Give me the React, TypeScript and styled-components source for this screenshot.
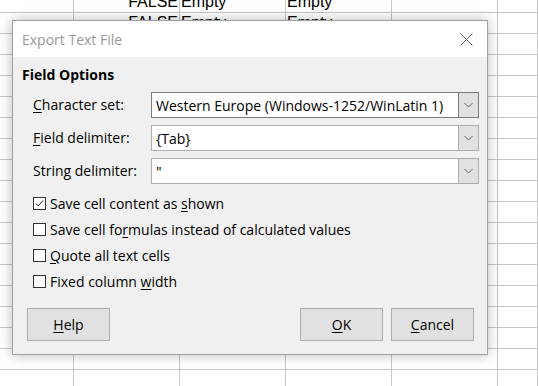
import React from 'react';
import styled, { createGlobalStyle } from 'styled-components';

const GlobalStyle = createGlobalStyle`
  html, body {
    margin: 0;
    padding: 0;
    background: #ffffff;
    overflow: hidden;
  }
  body {
    width: 538px;
    height: 386px;
    position: relative;
    font-family: 'Open Sans', 'Noto Sans', sans-serif;
  }
`;

const sheetRows = [
  ['', 'FALSE', 'Empty', 'Empty', '', ''],
  ['', 'FALSE', 'Empty', 'Empty', '', ''],
];

const Sheet = styled.div`
  display: grid;
  grid-template-columns: 74px repeat(4, 106px) 1fr;
  grid-auto-rows: 21px;
  margin-top: -8px;
`;

const Cell = styled.div<{ $right?: boolean }>`
  box-sizing: border-box;
  border-right: 1px solid #c6c6c6;
  border-bottom: 1px solid #c6c6c6;
  font-family: 'Liberation Sans', Arial, sans-serif;
  font-size: 16px;
  line-height: 20px;
  color: #000;
  padding: 0 1px;
  text-align: ${(p) => (p.$right ? 'right' : 'left')};
  overflow: hidden;
  white-space: nowrap;
`;

const Dialog = styled.div`
  position: absolute;
  left: 12px;
  top: 20px;
  width: 476px;
  height: 335px;
  box-sizing: border-box;
  border: 1px solid #a0a0a0;
  box-shadow: 0 0 12px rgba(0, 0, 0, 0.28);
  display: flex;
  flex-direction: column;
  background: #f0f0f0;
`;

const TitleBar = styled.div`
  height: 36px;
  background: #ffffff;
  display: flex;
  align-items: center;
  justify-content: space-between;
  padding: 0 14px 0 9px;
`;

const Title = styled.span`
  font-size: 14px;
  color: #9a9a9a;
`;

const Body = styled.div`
  flex: 1;
  display: flex;
  flex-direction: column;
  padding: 8px 13px 13px 9px;
  font-size: 14px;
  color: #000;
`;

const SectionHead = styled.div`
  font-weight: 700;
  line-height: 20px;
  margin-bottom: 7px;
`;

const FormGrid = styled.div`
  display: grid;
  grid-template-columns: 118px 328px;
  grid-auto-rows: 26px;
  row-gap: 7px;
  padding-left: 11px;
`;

const Label = styled.label`
  display: flex;
  align-items: center;
  line-height: 20px;
  white-space: pre;
`;

const Combo = styled.div<{ $focused?: boolean }>`
  display: flex;
  box-sizing: border-box;
  border: 1px solid ${(p) => (p.$focused ? '#7a7a7a' : '#abadb3')};
  background: #ffffff;
`;

const ComboText = styled.div`
  flex: 1;
  display: flex;
  align-items: center;
  padding-left: 4px;
  white-space: nowrap;
  overflow: hidden;
`;

const ComboButton = styled.div<{ $focused?: boolean }>`
  width: 19px;
  display: flex;
  align-items: center;
  justify-content: center;
  background: #e1e1e1;
  border-left: 1px solid ${(p) => (p.$focused ? '#7a7a7a' : '#abadb3')};
`;

const Checks = styled.div`
  display: flex;
  flex-direction: column;
  margin-top: 6px;
  padding-left: 11px;
`;

const CheckRow = styled.label`
  display: flex;
  align-items: center;
  height: 26px;
  gap: 4px;
`;

const Box = styled.span`
  width: 13px;
  height: 13px;
  box-sizing: border-box;
  border: 1px solid #333333;
  background: #ffffff;
  display: flex;
  align-items: center;
  justify-content: center;
`;

const Buttons = styled.div`
  margin-top: auto;
  display: flex;
  padding-left: 5px;
  gap: 8px;
`;

const Spacer = styled.div`
  flex: 1;
`;

const Button = styled.button`
  width: 83px;
  height: 33px;
  box-sizing: border-box;
  background: #e1e1e1;
  border: 1px solid #adadad;
  font-family: inherit;
  font-size: 14px;
  color: #000;
  padding: 0;
`;

const U = styled.span`
  text-decoration: underline;
  text-underline-offset: 2px;
`;

const Chevron = () => (
  <svg width="9" height="6" viewBox="0 0 9 6">
    <path d="M0.5 1 L4.5 5 L8.5 1" fill="none" stroke="#606060" strokeWidth="1" />
  </svg>
);

const CloseIcon = () => (
  <svg width="13" height="13" viewBox="0 0 13 13">
    <path d="M0.5 0.5 L12.5 12.5 M12.5 0.5 L0.5 12.5" stroke="#666" strokeWidth="1" />
  </svg>
);

const Tick = () => (
  <svg width="11" height="11" viewBox="0 0 11 11">
    <path d="M2 5.5 L4.3 8 L9 2.5" fill="none" stroke="#333" strokeWidth="1" />
  </svg>
);

const fields = [
  { pre: '', u: 'C', post: 'haracter set:', value: 'Western Europe (Windows-1252/WinLatin 1)', focused: true },
  { pre: '', u: 'F', post: 'ield delimiter:', value: '{Tab}', focused: false },
  { pre: 'Strin', u: 'g', post: ' delimiter:', value: '"', focused: false },
];

const checks = [
  { pre: 'Save cell content as ', u: 's', post: 'hown', checked: true },
  { pre: 'Save cell fo', u: 'r', post: 'mulas instead of calculated values', checked: false },
  { pre: '', u: 'Q', post: 'uote all text cells', checked: false },
  { pre: 'Fixed column ', u: 'w', post: 'idth', checked: false },
];

export default function App() {
  const rows = Array.from({ length: 19 }, (_, i) => sheetRows[i] || ['', '', '', '', '', '']);
  return (
    <>
      <GlobalStyle />
      <Sheet>
        {rows.map((r, i) =>
          r.map((c, j) => (
            <Cell key={`${i}-${j}`} $right={j === 1}>
              {c}
            </Cell>
          ))
        )}
      </Sheet>

      <Dialog>
        <TitleBar>
          <Title>Export Text File</Title>
          <CloseIcon />
        </TitleBar>
        <Body>
          <SectionHead>Field Options</SectionHead>
          <FormGrid>
            {fields.map((f) => (
              <React.Fragment key={f.post}>
                <Label>
                  <span>
                    {f.pre}
                    <U>{f.u}</U>
                    {f.post}
                  </span>
                </Label>
                <Combo $focused={f.focused}>
                  <ComboText>{f.value}</ComboText>
                  <ComboButton $focused={f.focused}>
                    <Chevron />
                  </ComboButton>
                </Combo>
              </React.Fragment>
            ))}
          </FormGrid>
          <Checks>
            {checks.map((c) => (
              <CheckRow key={c.post}>
                <Box>{c.checked && <Tick />}</Box>
                <span>
                  {c.pre}
                  <U>{c.u}</U>
                  {c.post}
                </span>
              </CheckRow>
            ))}
          </Checks>
          <Buttons>
            <Button>
              <U>H</U>elp
            </Button>
            <Spacer />
            <Button>
              <U>O</U>K
            </Button>
            <Button>
              <U>C</U>ancel
            </Button>
          </Buttons>
        </Body>
      </Dialog>
    </>
  );
}
